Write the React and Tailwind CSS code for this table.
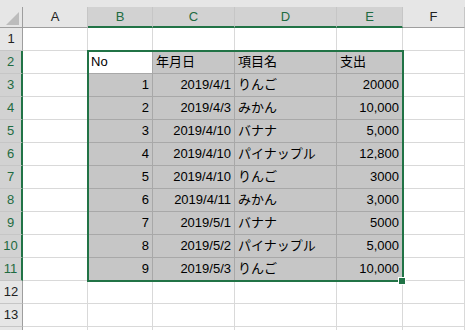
import React from 'react';

// Sheet data for B2:E11
const rows = [
  ['No', '年月日', '項目名', '支出'],
  [1, '2019/4/1', 'りんご', '20000'],
  [2, '2019/4/3', 'みかん', '10,000'],
  [3, '2019/4/10', 'バナナ', '5,000'],
  [4, '2019/4/10', 'パイナップル', '12,800'],
  [5, '2019/4/10', 'りんご', '3000'],
  [6, '2019/4/11', 'みかん', '3,000'],
  [7, '2019/5/1', 'バナナ', '5000'],
  [8, '2019/5/2', 'パイナップル', '5,000'],
  [9, '2019/5/3', 'りんご', '10,000'],
];

const columns = ['A', 'B', 'C', 'D', 'E', 'F'];
const selectedCols = ['B', 'C', 'D', 'E'];

const HeaderCell = ({ label }) => {
  const sel = selectedCols.includes(label);
  return (
    <div
      className={`flex items-center justify-center border-r border-r-[#c6c6c6] text-[13px] ${
        sel
          ? 'bg-[#d2d2d2] text-[#1e6b41] border-b-2 border-b-[#217346]'
          : 'bg-[#e6e6e6] text-[#222] border-b border-b-[#9e9e9e]'
      }`}
    >
      {label}
    </div>
  );
};

const RowHeader = ({ n, label }) => {
  const sel = n >= 2 && n <= 11;
  return (
    <div
      className={`flex items-center justify-center border-b border-b-[#c6c6c6] text-[13px] ${
        sel
          ? 'bg-[#d2d2d2] text-[#1e6b41] border-r-2 border-r-[#217346]'
          : 'bg-[#e6e6e6] text-[#222] border-r border-r-[#9e9e9e]'
      }`}
    >
      {label}
    </div>
  );
};

const Cell = ({ value, selected, active, align }) => {
  const bg = active ? 'bg-white' : selected ? 'bg-[#c6c6c6]' : 'bg-white';
  const lines = selected ? 'border-[#a8a8a8]' : 'border-[#d9d9d9]';
  return (
    <div
      className={`flex items-center border-r border-b ${lines} ${bg} px-[3px] text-[13px] text-black whitespace-nowrap overflow-hidden ${
        align === 'right' ? 'justify-end' : 'justify-start'
      }`}
    >
      {value}
    </div>
  );
};

export default function App() {
  const sheetRows = Array.from({ length: 14 }, (_, i) => i + 1);

  return (
    <div
      className="relative w-[465px] h-[330px] overflow-hidden bg-white"
      style={{ fontFamily: '"Liberation Sans", "Noto Sans CJK JP", sans-serif' }}
    >
      <div className="h-[7px] bg-[#e6e6e6]" />
      <div className="grid grid-cols-[23px_65px_65px_82px_102px_66px_62px] grid-rows-[21px_repeat(14,23px)]">
        {/* corner */}
        <div className="relative bg-[#e6e6e6] border-r border-b border-[#9e9e9e]">
          <svg className="absolute left-0 top-0" width="22" height="20" viewBox="0 0 22 20">
            <polygon points="19,5 19,18 6,18" fill="#bcbcbc" />
          </svg>
        </div>
        {columns.map((c) => (
          <HeaderCell key={c} label={c} />
        ))}

        {sheetRows.map((n) => {
          const data = n >= 2 && n <= 11 ? rows[n - 2] : null;
          return (
            <React.Fragment key={n}>
              {/* last row only peeks in under the window edge */}
              <RowHeader n={n} label={n < 14 ? n : ''} />
              <Cell />
              {[0, 1, 2, 3].map((ci) => (
                <Cell
                  key={ci}
                  value={data ? data[ci] : ''}
                  selected={!!data}
                  active={n === 2 && ci === 0}
                  align={data && n > 2 && ci !== 2 ? 'right' : 'left'}
                />
              ))}
              <Cell />
            </React.Fragment>
          );
        })}
      </div>

      {/* selection outline and fill handle */}
      <div className="absolute left-[87px] top-[50px] w-[317px] h-[232px] border-2 border-[#217346] pointer-events-none" />
      <div className="absolute left-[399px] top-[278px] w-[6px] h-[6px] bg-[#217346] outline outline-1 outline-white" />
    </div>
  );
}
